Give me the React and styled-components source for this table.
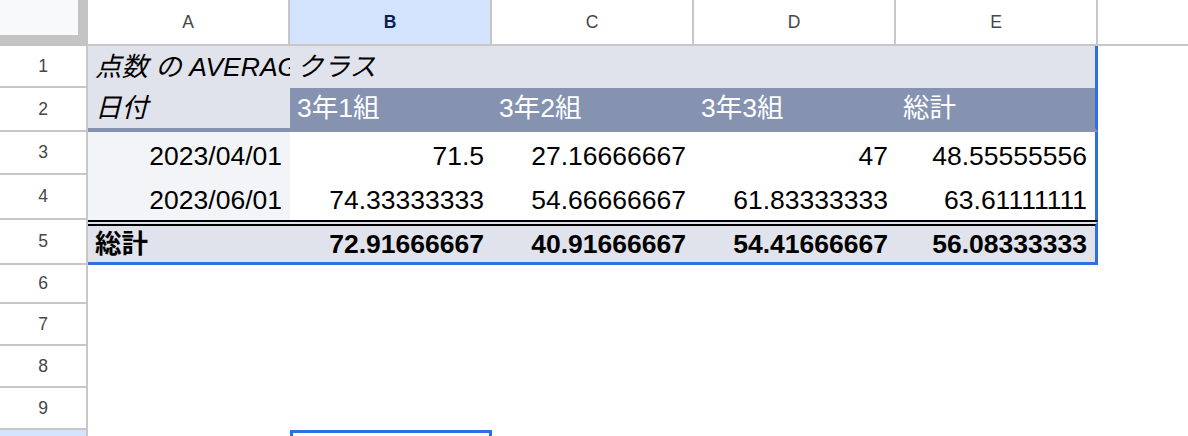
import React from 'react';
import styled, { createGlobalStyle, css } from 'styled-components';

const GlobalStyle = createGlobalStyle`
  html, body {
    margin: 0;
    padding: 0;
    background: #ffffff;
    overflow: hidden;
  }
  body {
    font-family: "Liberation Sans", Arial, "Noto Sans CJK JP", sans-serif;
  }
`;

const GRID = '#c7c7c7';
const LIGHT = '#e0e3eb';
const DARK = '#8592b0';
const PALE = '#f3f4f7';
const BLUE = '#2f6fe4';

const Sheet = styled.div`
  display: flex;
  flex-direction: column;
  width: 1188px;
  height: 436px;
  overflow: hidden;
`;

const Row = styled.div`
  display: grid;
  grid-template-columns: 88px repeat(5, 202px) 1fr;
  height: ${p => p.$h}px;
  flex-shrink: 0;
`;

const Corner = styled.div`
  box-sizing: border-box;
  background: #f8f9fa;
  border-right: 10px solid #c4c4c4;
  border-bottom: 11px solid #c4c4c4;
`;

const ColHeader = styled.div`
  box-sizing: border-box;
  display: flex;
  align-items: center;
  justify-content: center;
  border-bottom: 2px solid ${GRID};
  border-right: ${p => (p.$blank ? 'none' : `2px solid ${GRID}`)};
  background: ${p => (p.$active ? '#d3e3fd' : '#ffffff')};
  color: ${p => (p.$active ? '#0b1d51' : '#444746')};
  font-weight: ${p => (p.$active ? 700 : 400)};
  font-size: 17.5px;
`;

const RowHeader = styled.div`
  box-sizing: border-box;
  display: flex;
  align-items: center;
  justify-content: center;
  border-right: 2px solid ${GRID};
  border-bottom: 2px solid ${GRID};
  background: ${p => (p.$active ? '#d3e3fd' : '#ffffff')};
  color: ${p => (p.$active ? '#0b1d51' : '#444746')};
  font-size: 17.5px;
`;

const rules = {
  head: css`
    border-bottom: 4px solid ${DARK};
  `,
  total: css`
    border-top: 6px double #000000;
    border-bottom: 3px solid ${BLUE};
  `,
};

const Cell = styled.div`
  box-sizing: border-box;
  display: flex;
  align-items: center;
  justify-content: ${p => (p.$align === 'right' ? 'flex-end' : 'flex-start')};
  padding: 0 8px 0 7px;
  overflow: hidden;
  white-space: nowrap;
  background: ${p => p.$bg || '#ffffff'};
  color: ${p => p.$color || '#000000'};
  font-size: 26.5px;
  line-height: 30px;
  font-weight: ${p => (p.$bold ? 700 : 400)};
  font-style: ${p => (p.$italic ? 'italic' : 'normal')};
  ${p => p.$rule && rules[p.$rule]}
  ${p => p.$edge && css`border-right: 3px solid ${BLUE};`}
`;

const Text = styled.span`
  padding-top: ${p => p.$drop || 0}px;
`;

const ActiveCell = styled.div`
  box-sizing: border-box;
  border: 3px solid ${BLUE};
  background: #ffffff;
`;

const columns = ['A', 'B', 'C', 'D', 'E'];

const classes = ['3年1組', '3年2組', '3年3組', '総計'];

const body = [
  { date: '2023/04/01', values: ['71.5', '27.16666667', '47', '48.55555556'] },
  { date: '2023/06/01', values: ['74.33333333', '54.66666667', '61.83333333', '63.61111111'] },
];

const totals = ['72.91666667', '40.91666667', '54.41666667', '56.08333333'];

const App = () => {
  return (
    <>
      <GlobalStyle />
      <Sheet>
        <Row $h={46}>
          <Corner />
          {columns.map(c => (
            <ColHeader key={c} $active={c === 'B'}>{c}</ColHeader>
          ))}
          <ColHeader $blank />
        </Row>

        <Row $h={42}>
          <RowHeader>1</RowHeader>
          <Cell $bg={LIGHT} $italic>点数 の AVERAGE</Cell>
          <Cell $bg={LIGHT} $italic>クラス</Cell>
          <Cell $bg={LIGHT} />
          <Cell $bg={LIGHT} />
          <Cell $bg={LIGHT} $edge />
          <Cell />
        </Row>

        <Row $h={44}>
          <RowHeader>2</RowHeader>
          <Cell $bg={LIGHT} $italic $rule="head">日付</Cell>
          {classes.map((name, i) => (
            <Cell
              key={name}
              $bg={DARK}
              $color="#ffffff"
              $rule="head"
              $edge={i === classes.length - 1}
            >
              {name}
            </Cell>
          ))}
          <Cell />
        </Row>

        {body.map((r, idx) => (
          <Row key={r.date} $h={idx === 0 ? 43 : 45}>
            <RowHeader>{idx + 3}</RowHeader>
            <Cell $bg={PALE} $align="right"><Text $drop={4}>{r.date}</Text></Cell>
            {r.values.map((v, i) => (
              <Cell key={i} $align="right" $edge={i === r.values.length - 1}>
                <Text $drop={4}>{v}</Text>
              </Cell>
            ))}
            <Cell />
          </Row>
        ))}

        <Row $h={45}>
          <RowHeader>5</RowHeader>
          <Cell $bg={LIGHT} $bold $rule="total">総計</Cell>
          {totals.map((v, i) => (
            <Cell
              key={i}
              $bg={LIGHT}
              $bold
              $align="right"
              $rule="total"
              $edge={i === totals.length - 1}
            >
              {v}
            </Cell>
          ))}
          <Cell />
        </Row>

        {[6, 7, 8, 9].map((n, i) => (
          <Row key={n} $h={i === 0 ? 39 : 42}>
            <RowHeader>{n}</RowHeader>
            {columns.map(c => <Cell key={c} />)}
            <Cell />
          </Row>
        ))}

        <Row $h={42}>
          <RowHeader $active>10</RowHeader>
          <Cell />
          <ActiveCell />
          <Cell />
          <Cell />
          <Cell />
          <Cell />
        </Row>
      </Sheet>
    </>
  );
};

export default App;
